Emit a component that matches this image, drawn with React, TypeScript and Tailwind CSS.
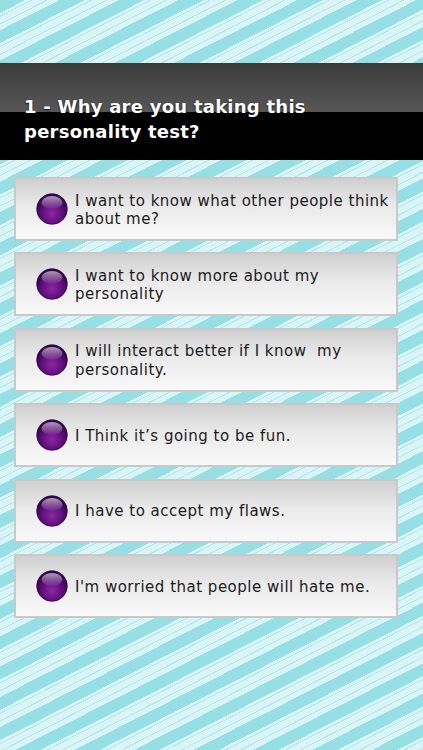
import React from "react";

const answers: React.ReactNode[] = [
  <>I want to know what other people think<br />about me?</>,
  <>I want to know more about my<br />personality</>,
  <>I will interact better if I know&nbsp; my<br />personality.</>,
  <>I Think it’s going to be fun.</>,
  <>I have to accept my flaws.</>,
  <>I'm worried that people will hate me.</>,
];

function Ball({ id }: { id: number }) {
  return (
    <svg width="32" height="32" viewBox="0 0 32 32" className="shrink-0">
      <defs>
        <radialGradient id={`b${id}`} cx="50%" cy="65%" r="55%">
          <stop offset="0%" stopColor="#8a28a2" />
          <stop offset="55%" stopColor="#64107f" />
          <stop offset="100%" stopColor="#36044c" />
        </radialGradient>
        <linearGradient id={`h${id}`} x1="0" y1="0" x2="0" y2="1">
          <stop offset="0%" stopColor="#ffffff" stopOpacity="0.6" />
          <stop offset="100%" stopColor="#ffffff" stopOpacity="0.03" />
        </linearGradient>
      </defs>
      <circle cx="16" cy="16" r="15.5" fill={`url(#b${id})`} />
      <circle cx="16" cy="16" r="15.2" fill="none" stroke="#2a0340" strokeWidth="0.8" strokeOpacity="0.7" />
      <ellipse cx="16" cy="9.5" rx="10.5" ry="6.5" fill={`url(#h${id})`} />
    </svg>
  );
}

export default function App() {
  return (
    <div
      className="relative w-[423px] h-[750px] overflow-hidden bg-[repeating-linear-gradient(153deg,#95dfe5_0px,#95dfe5_11.5px,#daf5f7_11.5px,#daf5f7_14px,#b2e7eb_14px,#b2e7eb_15px,#daf5f7_15px,#daf5f7_21px,#b2e7eb_21px,#b2e7eb_22px,#daf5f7_22px,#daf5f7_27px)]"
      style={{ fontFamily: '"DejaVu Sans", Verdana, sans-serif' }}
    >
      <div className="h-[63px]" />
      <div className="h-[97px] bg-[linear-gradient(to_bottom,#3b3b3b_0px,#575757_49px,#000000_49px,#000000_100%)] pl-[24px] pt-[31px]">
        <h1 className="text-white font-bold text-[18px] leading-[25px] tracking-[0.25px] [text-shadow:0_1px_2px_rgba(0,0,0,0.9)]">
          1 - Why are you taking this
          <br />
          personality test?
        </h1>
      </div>
      <div className="mt-[17px] flex flex-col gap-[11.4px] pl-[14px]">
        {answers.map((a, i) => (
          <div
            key={i}
            className="w-[384px] h-[64px] border-2 border-[#c9c9c9] bg-[linear-gradient(to_bottom,#d0d0d0,#eaeaea_45%,#f9f9f9)] flex items-center pl-[20px] gap-[7px]"
          >
            <Ball id={i} />
            <div className="text-[15px] leading-[18.5px] tracking-[0.5px] text-[#1b1b1b] pt-[2px]">{a}</div>
          </div>
        ))}
      </div>
    </div>
  );
}
